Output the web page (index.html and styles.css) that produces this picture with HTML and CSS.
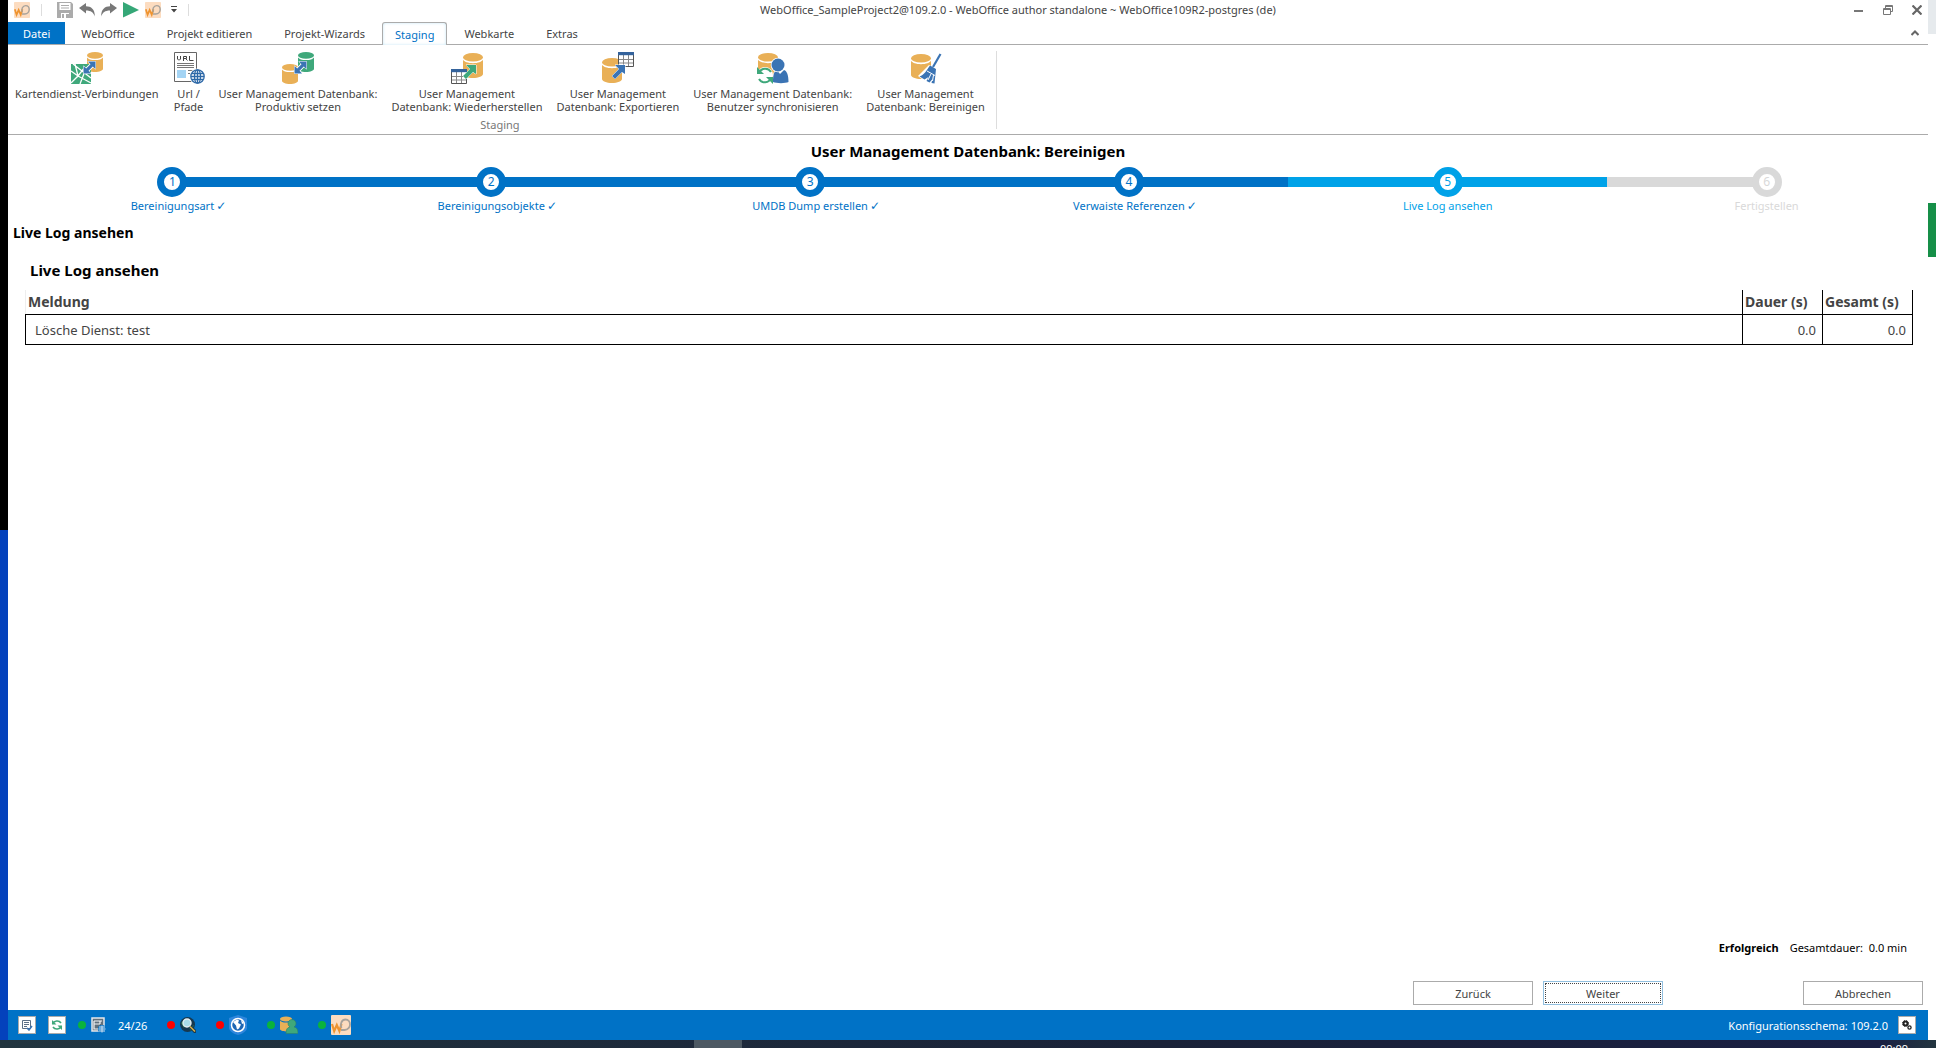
FILE: index.html
```
<!DOCTYPE html>
<html lang="de">
<head>
    <meta charset="UTF-8">
    <meta name="viewport" content="width=device-width, initial-scale=1.0">
    <title>WebOffice author standalone</title>
    <link rel="stylesheet" href="styles.css">
</head>
<body>
    <!-- wiederverwendete Symbole -->
    <svg class="defs" aria-hidden="true">
        <symbol id="cyl" viewBox="0 0 16 20">
            <path d="M0 5.4v11.4c0 1.8 3.6 3.2 8 3.2s8-1.400 8-3.200V5.400C15 7 12 8.100 8 8.100S1 7 0 5.400z"/>
            <ellipse cx="8" cy="3.400" rx="8" ry="3.400"/>
        </symbol>
        <symbol id="grid" viewBox="0 0 16 15">
            <path fill="#fff" stroke="#555" d="M.5.5h15v14H.5z"/>
            <path stroke="#888" d="M5.500 3v11M10.500 3v11M1 7.500h14M1 11h14"/>
            <path fill="#35639c" d="M0 0h16v3.200H0z"/>
        </symbol>
        <symbol id="both" viewBox="0 0 13 13">
            <path stroke="#fff" stroke-width="5" d="M3 10l7-7"/>
            <path fill="#3b74b4" stroke="#fff" stroke-width="1" paint-order="stroke" d="M5 .5h7.500V8L9.800 5.500 5.500 9.800 8 12.500H.5V5l2.700 2.500 4.300-4.300z"/>
        </symbol>
        <symbol id="wo" viewBox="0 0 20 20">
            <rect width="20" height="20" rx="1" fill="#fcdcc0"/>
            <path fill="none" stroke="#ef9430" stroke-width="2.200" d="M1 9l2.200 7L5.800 10l2.600 6L10.500 9"/>
            <path fill="none" stroke="#a8a39c" stroke-width="1.800" d="M10.500 13c-2-4 .5-8.500 4-8.500 3 0 4.500 2.500 4.500 5s-2 5.500-5.500 5.500H10"/>
        </symbol>
    </svg>

    <div class="desktop">
        <div class="edge-left"></div>

        <div class="app">
            <header class="titlebar">
                <div class="quick">
                    <svg class="i16"><use href="#wo"/></svg>
                    <i class="sep"></i>
                    <button class="save" title="Speichern"><svg class="i16" viewBox="0 0 16 16"><path fill="#ababab" d="M0 0h14l2 2v14H0z"/><path fill="#fff" d="M2.500 1h11v7h-11zM4 11h8v5H4z"/><path stroke="#ababab" d="M4 3.500h8M4 6h8"/><path fill="#ababab" d="M5 12h2v4H5zM9 12h3v4H9z"/></svg></button>
                    <button title="Rückgängig"><svg class="i16" viewBox="0 0 16 16"><path fill="#787878" d="M0 6l7-5v3.300c5 0 9 3 8.800 10.200C14.500 10.500 12 8.500 7 8.500v3z"/></svg></button>
                    <button title="Wiederholen"><svg class="i16" viewBox="0 0 16 16"><path fill="#787878" d="M16 6L9 1v3.300c-5 0-9 3-8.800 10.200C1.500 10.500 4 8.500 9 8.500v3z"/></svg></button>
                    <button title="Starten"><svg class="i16" viewBox="0 0 16 16"><path fill="#35a777" d="M0 0l16 8-16 7.500z"/></svg></button>
                    <button title="WebOffice"><svg class="i16"><use href="#wo"/></svg></button>
                    <button class="more" title="Anpassen"><svg width="6" height="7"><path fill="#444" d="M0 0h6v1H0zM0 3h6L3 6.500z"/></svg></button>
                    <i class="sep"></i>
                </div>
                <div class="caption">WebOffice_SampleProject2@109.2.0 - WebOffice author standalone ~ WebOffice109R2-postgres (de)</div>
                <div class="winbtns">
                    <button title="Minimieren"><svg width="10" height="10"><path fill="#777" d="M0 5h9v2H0z"/></svg></button>
                    <button title="Wiederherstellen"><svg width="10" height="10" fill="none" stroke="#777"><path d="M.5 3.500h7v6h-7zM2.500 3V.5h7v6H8"/><path d="M0 4.500h8M2 1.500h8"/></svg></button>
                    <button title="Schließen"><svg width="10" height="10"><path stroke="#666" stroke-width="2.200" d="M.5.5l9 9M9.500.5l-9 9"/></svg></button>
                </div>
            </header>

            <nav class="tabs">
                <button class="tab file">Datei</button>
                <button class="tab">WebOffice</button>
                <button class="tab">Projekt editieren</button>
                <button class="tab">Projekt-Wizards</button>
                <button class="tab active">Staging</button>
                <button class="tab">Webkarte</button>
                <button class="tab">Extras</button>
                <button class="collapse" title="Menüband reduzieren"><svg width="8" height="6"><path fill="none" stroke="#666" stroke-width="2" d="M.5 5L4 1.500 7.500 5"/></svg></button>
            </nav>

            <section class="ribbon">
                <div class="group">
                    <div class="tools">
                        <button class="tool">
                            <svg class="i32" viewBox="0 0 32 32"><use href="#cyl" x="16" y="0" width="16" height="20" fill="#e9b057"/><path fill="#3fa87b" d="M0 12h20v20H0z"/><path stroke="#fff" stroke-width="1.300" fill="none" d="M0 19l7 5 13 7M7 24l-7 7M4 12l3 12 7-9M2 12l18 14M9 32l5-13"/><use href="#both" x="12" y="9" width="13" height="13"/></svg>
                            <span>Kartendienst-Verbindungen</span>
                        </button>
                        <button class="tool">
                            <svg class="i32" viewBox="0 0 32 32"><path fill="#fff" stroke="#666" d="M1.500.5h22v29h-22z"/><path fill="none" stroke="#444" d="M4.500 4v3l1 1h1l1-1V4M10.500 9V4.500h3v2h-3M12.500 6.500l2 2M16.500 4v4.500h4"/><path stroke="#777" d="M4 11.500h17M4 13.500h17M4 15.500h17M15 18.500h5M15 21.500h2"/><path fill="#a4d4f4" d="M4 18h9v8H4z"/><circle cx="24.500" cy="24.500" r="8" fill="#fff"/><g fill="none" stroke="#2e69a8" stroke-width="1.300"><circle cx="24.500" cy="24.500" r="6.700"/><ellipse cx="24.500" cy="24.500" rx="3" ry="6.700"/><path d="M24.500 18v13M18 24.500h13M19 21.500h11M19 27.500h11"/></g></svg>
                            <span>Url /<br>Pfade</span>
                        </button>
                        <button class="tool">
                            <svg class="i32" viewBox="0 0 32 32"><use href="#cyl" x="16" y="0" width="16" height="20" fill="#3fa87b"/><use href="#cyl" x="0" y="12" width="16" height="20" fill="#e9b057"/><use href="#both" x="12" y="9" width="13" height="13"/></svg>
                            <span>User Management Datenbank:<br>Produktiv setzen</span>
                        </button>
                        <button class="tool">
                            <svg class="i32" viewBox="0 0 32 32"><use href="#cyl" x="12" y="0" width="20" height="27" fill="#e9b057"/><use href="#grid" x="0" y="17" width="16" height="15"/><path fill="#3fa87b" stroke="#fff" paint-order="stroke" d="M15 13h10v9l-3-2-7 7-3-3 7-7z"/></svg>
                            <span>User Management<br>Datenbank: Wiederherstellen</span>
                        </button>
                        <button class="tool">
                            <svg class="i32" viewBox="0 0 32 32"><use href="#cyl" x="0" y="5" width="20" height="27" fill="#e9b057"/><use href="#grid" x="16" y="0" width="16" height="15"/><path fill="#3b74b4" stroke="#fff" paint-order="stroke" d="M13 13h10v9l-3-2-7 7-3-3 7-7z"/></svg>
                            <span>User Management<br>Datenbank: Exportieren</span>
                        </button>
                        <button class="tool">
                            <svg class="i32" viewBox="0 0 32 32"><use href="#cyl" x="1" y="0" width="20" height="27" fill="#e9b057"/><g fill="#3b74b4" stroke="#fff" paint-order="stroke" stroke-width="1.500"><path d="M16 30c0-7 1-11 4-12l3 4 4-4c3 1 4.500 5 4.500 12-3 1.500-12 1.500-15.500 0z"/><circle cx="21" cy="13" r="6.500"/></g><circle cx="8" cy="23" r="8" fill="#fff"/><g fill="none" stroke="#3fa87b" stroke-width="2"><path d="M2 21c2-5 9-6 12-1M14 26c-2 5-9 6-12 1"/></g><path fill="#3fa87b" d="M0 15v7h7zM16 32v-7H9z"/></svg>
                            <span>User Management Datenbank:<br>Benutzer synchronisieren</span>
                        </button>
                        <button class="tool">
                            <svg class="i32" viewBox="0 0 32 32"><use href="#cyl" x="1" y="1" width="20" height="27" fill="#e9b057"/><path fill="#fff" d="M8 24l11-11 8 3-2 16-8-1z"/><path stroke="#3b74b4" stroke-width="2.200" d="M30.500 2L23 15"/><path fill="#3b74b4" d="M20 13.500l6 3.500-1.500 14.500-3-.5 1-4-3 3.500-3-1.500 2-4-4 2.500-5-3c5-2 7-6 10.500-11z"/><path stroke="#fff" d="M17 19l8 4.500M21 22l-3 6M23.500 23l-1 6"/></svg>
                            <span>User Management<br>Datenbank: Bereinigen</span>
                        </button>
                    </div>
                    <div class="group-name">Staging</div>
                </div>
            </section>

            <main class="wizard">
                <h1>User Management Datenbank: Bereinigen</h1>
                <ol class="steps">
                    <li class="done"><b>1</b><span>Bereinigungsart<i class="check">✓</i></span></li>
                    <li class="done"><b>2</b><span>Bereinigungsobjekte<i class="check">✓</i></span></li>
                    <li class="done"><b>3</b><span>UMDB Dump erstellen<i class="check">✓</i></span></li>
                    <li class="done"><b>4</b><span>Verwaiste Referenzen<i class="check">✓</i></span></li>
                    <li class="current"><b>5</b><span>Live Log ansehen</span></li>
                    <li><b>6</b><span>Fertigstellen</span></li>
                </ol>

                <h2>Live Log ansehen</h2>
                <h3>Live Log ansehen</h3>
                <table class="log">
                    <thead>
                        <tr><th>Meldung</th><th class="dauer">Dauer (s)</th><th class="gesamt">Gesamt (s)</th></tr>
                    </thead>
                    <tbody>
                        <tr><td>Lösche Dienst: test</td><td>0.0</td><td>0.0</td></tr>
                    </tbody>
                </table>

                <div class="summary"><strong>Erfolgreich</strong><span>Gesamtdauer:&nbsp; 0.0 min</span></div>
                <div class="actions">
                    <button class="btn">Zurück</button>
                    <button class="btn focus">Weiter</button>
                    <button class="btn cancel">Abbrechen</button>
                </div>
            </main>

            <footer class="status">
                <button class="box" title="Protokoll"><svg width="12" height="12" viewBox="0 0 12 12"><path fill="none" stroke="#5b6f86" d="M1.500 1.500h8v8h-8zM3 3.500h5M3 5.500h5M3 7.500h3"/><path fill="none" stroke="#3b74b4" stroke-width="1.500" d="M6 9l2 2 3-4"/></svg></button>
                <button class="box" title="Aktualisieren"><svg width="12" height="12" viewBox="0 0 12 12"><path fill="none" stroke="#3fa87b" stroke-width="1.600" d="M1.500 5C3 1.500 8 1 10 4M10.500 7C9 10.500 4 11 2 8"/><path fill="#3fa87b" d="M1 1v4.500h4.500zM11 11V6.500H6.500z"/></svg></button>
                <div class="item"><i class="dot"></i><svg width="15" height="16" viewBox="0 0 15 16"><path fill="#60707c" stroke="#e4e8ec" stroke-width="1.500" d="M1 1h12v13H1z"/><path fill="none" stroke="#f2f4f6" stroke-width="1.200" d="M3 4h8M3 7h6M3 4v8h4M9 4v3"/><circle cx="11" cy="12" r="4" fill="#0072c6"/><path fill="none" stroke="#cfe0f0" d="M7.500 12h7M11 8.500v7M8 10h6M8 14h6"/></svg><span>24/26</span></div>
                <div class="item"><i class="dot red"></i><svg width="16" height="16" viewBox="0 0 16 16"><circle cx="7.500" cy="7.500" r="7.500" fill="#16384e"/><path fill="#2e7d57" d="M1 6l4-4 2 3-3 6zM9 11l5-3-3 6z"/><circle cx="7" cy="6" r="4" fill="#a9dce8" stroke="#e4eef2" stroke-width="1.400"/><path stroke="#16384e" stroke-width="3.500" d="M10 9.500l6 6"/><path stroke="#d7b04a" stroke-width="1.600" d="M10 9.500l5 5"/></svg></div>
                <div class="item"><i class="dot red"></i><svg width="18" height="20" viewBox="0 0 18 20"><path fill="#2f86dc" d="M9 0l9 3v10c0 3-5 6-9 7-4-1-9-4-9-7V3z"/><circle cx="9" cy="10" r="6.500" fill="#1e66b4" stroke="#fff" stroke-width="1.500"/><path fill="#fff" d="M4 7l4-2.500 2 1-1 2.500 3 1.500-2 4-2 1-1-4zM12 5l3 3-2 1z"/></svg></div>
                <div class="item"><i class="dot"></i><svg width="18" height="18" viewBox="0 0 18 18"><use href="#cyl" width="12" height="16" fill="#e9b057"/><path fill="#3fa87b" stroke="#2c7f6c" stroke-width=".6" d="M6 17.500c0-4 1-6 4-6.500a4 4 0 1 1 4 0c3 .5 4 2.500 4 6.500z"/></svg></div>
                <div class="item"><i class="dot"></i><svg width="20" height="20"><use href="#wo"/></svg></div>
                <div class="schema"><span>Konfigurationsschema: 109.2.0</span><button class="gear" title="Konfiguration"><svg width="10" height="10" viewBox="0 0 10 10" fill="none" stroke="#222"><circle cx="3.500" cy="3.500" r="2" stroke-width="2"/><circle cx="3.500" cy="3.500" r="3" stroke-dasharray="1.200 1.200"/><circle cx="7.500" cy="7.500" r="1.600" stroke-width="1.300"/></svg></button></div>
            </footer>
        </div>

        <div class="edge-right">
            <div class="notch"></div>
            <div class="green"></div>
        </div>

        <div class="taskbar"><i class="task"></i><span class="clock">09:09</span></div>
    </div>
</body>
</html>
```
FILE: styles.css
```
* {
    box-sizing: border-box;
}
body {
    margin: 0;
    background: #fff;
    color: #444;
    font-family: "Noto Sans", "Open Sans", sans-serif;
    font-size: 11px;
    line-height: 13px;
    overflow: hidden;
}
button {
    padding: 0;
    border: none;
    background: none;
    color: inherit;
    font: inherit;
}
svg {
    display: block;
    flex: none;
}
.defs {
    position: absolute;
    width: 0;
    height: 0;
}
.i16 {
    width: 16px;
    height: 16px;
}
.i32 {
    width: 32px;
    height: 32px;
}
.desktop {
    display: grid;
    grid-template-columns: 8px 1fr 8px;
    grid-template-rows: 1fr 8px;
    height: 100vh;
}
.edge-left {
    background: linear-gradient(#000 51%, #0442bc 51%);
}
.app {
    display: flex;
    flex-direction: column;
    min-width: 0;
}

/* Titelleiste */
.titlebar {
    display: flex;
    align-items: center;
    height: 19px;
}
.quick {
    display: flex;
    align-items: center;
    gap: 6px;
    padding-left: 6px;
}
.caption {
    flex: 1;
    padding-right: 12px;
    text-align: center;
}
.sep {
    width: 1px;
    height: 12px;
    margin: 0 5px;
    background: #ddd;
}
.save, .more {
    margin-left: 4px;
}
.winbtns {
    display: flex;
    gap: 19px;
    padding-right: 6px;
}

/* Register */
.tabs {
    display: flex;
    align-items: flex-end;
    height: 26px;
    border-bottom: 1px solid #ababab;
}
.tab {
    height: 22px;
    padding: 0 16px;
}
.file {
    padding: 0 15px;
    background: #0072c6;
    color: #fff;
}
.active {
    height: 23px;
    margin: 0 1px -1px;
    padding: 0 12px;
    border: 1px solid #ababab;
    border-bottom: none;
    border-radius: 3px 3px 0 0;
    background: #fff;
    box-shadow: inset 0 0 3px #c5e6f5;
    color: #0072c6;
}
.collapse {
    margin: 0 9px 8px auto;
}

/* Menüband */
.ribbon {
    display: flex;
    height: 90px;
    padding: 6px 0 5px;
    border-bottom: 1px solid #ababab;
}
.group {
    display: flex;
    flex-direction: column;
    justify-content: space-between;
    padding-right: 4px;
    border-right: 1px solid #ddd;
}
.tools {
    display: flex;
}
.tool {
    display: flex;
    flex-direction: column;
    align-items: center;
    gap: 3px;
    padding: 1px 7px 0;
}
.group-name {
    margin-bottom: -2px;
    color: #777;
    text-align: center;
}

/* Assistent */
.wizard {
    display: flex;
    flex: 1;
    flex-direction: column;
    padding: 0 5px;
    color: #000;
}
h1, h2, h3 {
    margin: 0;
    font-size: 14px;
    line-height: 20px;
}
h1 {
    margin-top: 6px;
    font-size: 15px;
    text-align: center;
}
.steps {
    display: grid;
    grid-template-columns: repeat(6, 1fr);
    margin: 6px -3px 0 0;
    padding: 0;
    list-style: none;
}
.steps li {
    --line: #d9d9d9;
    --from: var(--line);
    --to: var(--line);
    display: flex;
    flex-direction: column;
    align-items: center;
    gap: 2px;
    background: linear-gradient(90deg, var(--from) 50%, var(--to) 50%) 0 10px / 100% 10px no-repeat;
    color: var(--line);
}
.steps .done {
    --line: #0072c6;
}
.steps .current {
    --line: #00a2e8;
}
.steps li:first-child {
    --from: transparent;
}
.steps li:last-child {
    --to: transparent;
}
.steps b {
    width: 30px;
    height: 30px;
    border: 7px solid var(--line);
    border-radius: 50%;
    background: #fff;
    font-size: 12px;
    font-weight: normal;
    line-height: 16px;
    text-align: center;
}
.check {
    display: inline-block;
    width: 12px;
    margin-right: -12px;
    padding-left: 2px;
    font-family: "DejaVu Sans", sans-serif;
    font-size: 12px;
    font-style: normal;
    font-weight: bold;
}
h2 {
    margin-top: 10px;
}
h3 {
    margin: 17px 0 0 17px;
    font-size: 15px;
}
.log {
    width: calc(100% - 22px);
    margin: 10px 0 0 12px;
    border-collapse: collapse;
    color: #444;
    font-size: 14px;
    line-height: 20px;
}
.log th {
    height: 24px;
    padding: 1px 2px 0;
    border: 1px solid #000;
    border-top: none;
    text-align: left;
}
.log th:first-child {
    border-left-color: #eee;
}
.log td {
    height: 30px;
    padding: 1px 6px 0 9px;
    border: 1px solid #000;
    font-size: 13px;
}
.log td + td {
    text-align: right;
}
.dauer {
    width: 80px;
}
.gesamt {
    width: 90px;
}
.summary {
    display: flex;
    justify-content: flex-end;
    gap: 11px;
    margin-top: auto;
    padding-right: 16px;
}
.actions {
    display: flex;
    justify-content: flex-end;
    gap: 10px;
    margin: 27px 0 5px;
}
.btn {
    width: 120px;
    height: 24px;
    border: 1px solid #ababab;
    background: #fff;
    color: #444;
}
.focus {
    border-color: #92c0e0;
    outline: 1px dotted #444;
    outline-offset: -3px;
}
.cancel {
    margin-left: 130px;
}

/* Statusleiste */
.status {
    display: flex;
    align-items: center;
    height: 30px;
    padding: 0 12px 0 10px;
    background: #0072c6;
    color: #fff;
}
.box, .gear {
    display: grid;
    place-items: center;
    width: 18px;
    height: 18px;
    margin-right: 12px;
    border: 1px solid #ababab;
    background: #fff;
}
.item {
    display: flex;
    align-items: center;
    gap: 5px;
    margin-right: 20px;
}
.item span {
    margin-left: 7px;
}
.dot {
    width: 8px;
    height: 8px;
    border-radius: 50%;
    background: #0ab33c;
}
.red {
    background: #f00;
}
.schema {
    display: flex;
    align-items: center;
    gap: 10px;
    margin-left: auto;
}
.gear {
    margin: 0;
}

/* Rand rechts und Taskleiste */
.notch {
    height: 34px;
    background: #e6eaed;
}
.green {
    height: 54px;
    margin-top: 169px;
    background: #168f48;
}
.taskbar {
    display: flex;
    grid-column: 1 / -1;
    justify-content: space-between;
    padding: 0 28px 0 694px;
    background: linear-gradient(90deg, #22353f, #1a2238 60%, #1a1f42 97%, #22353f);
    color: #fff;
    overflow: hidden;
}
.task {
    width: 48px;
    background: #4d5963;
}
.clock {
    margin-top: 2px;
}
```
